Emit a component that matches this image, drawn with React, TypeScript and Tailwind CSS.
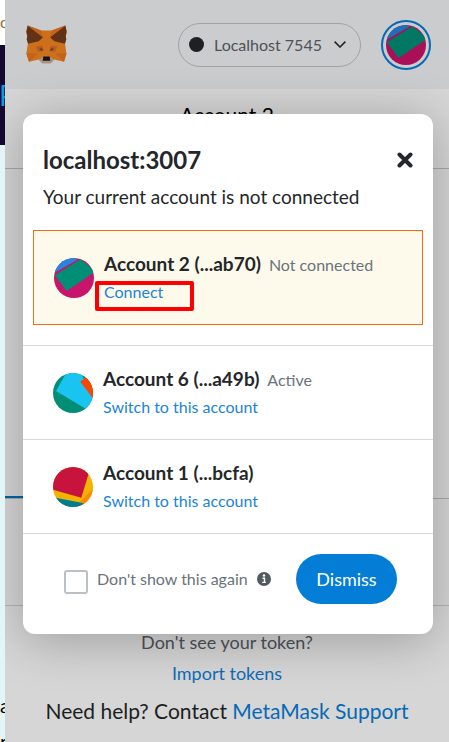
import React from 'react';

type Shape = { points: string; fill: string };

function Jazzicon({ id, base, shapes, className }: { id: string; base: string; shapes: Shape[]; className: string }) {
  return (
    <svg viewBox="0 0 120 120" className={className} aria-hidden="true">
      <clipPath id={id}>
        <circle cx="60" cy="60" r="60" />
      </clipPath>
      <g clipPath={`url(#${id})`}>
        <rect width="120" height="120" fill={base} />
        {shapes.map((s) => (
          <polygon key={s.points} points={s.points} fill={s.fill} />
        ))}
      </g>
    </svg>
  );
}

function Fox() {
  return (
    <svg viewBox="0 0 123 116" className="h-[39px] w-[41px]" role="img" aria-label="MetaMask">
      <polygon points="5,1 46,16 77,16 118,1 122,20 117,54 121,84 114,110 84,103 74,114 49,114 39,103 9,110 1,84 6,54 1,20" fill="#cd701b" />
      <polygon points="5,1 51,36 38,48 6,56 2,42 4,32 1,20" fill="#623216" />
      <polygon points="118,1 72,36 85,48 117,56 121,42 119,32 122,20" fill="#623216" />
      <polygon points="5,1 46,16 51,36" fill="#c2621e" />
      <polygon points="118,1 77,16 72,36" fill="#c2621e" />
      <polygon points="1,84 36,84 9,110" fill="#c4621c" />
      <polygon points="122,84 87,84 114,110" fill="#c4621c" />
      <polygon points="30,64 50,62 53,78 36,80" fill="#ba5a1b" />
      <polygon points="93,64 73,62 70,78 87,80" fill="#ba5a1b" />
      <polygon points="40,71 47,69 51,76 45,76" fill="#43403f" />
      <polygon points="83,71 76,69 72,76 78,76" fill="#43403f" />
      <polygon points="37,103 50,97 73,97 86,103 74,114 49,114" fill="#a79485" />
      <polygon points="52,94 71,94 73,107 50,107" fill="#151515" />
    </svg>
  );
}

const green: Shape[] = [
  { points: '0,45 70,5 0,-40', fill: '#2586dd' },
  { points: '2,52 80,4 125,40 38,99', fill: '#018e77' },
];
const greenDim: Shape[] = [
  { points: '0,45 70,5 0,-40', fill: '#1c70b9' },
  { points: '2,52 80,4 125,40 38,99', fill: '#017864' },
];
const cyan: Shape[] = [
  { points: '0,72 10,100 0,110', fill: '#fa7a00' },
  { points: '25,6 36,0 10,0', fill: '#fa7a00' },
  { points: '9,54 42,-4 80,-6 130,90 98,107', fill: '#19c4f1' },
  { points: '82,26 104,8 130,30 130,90', fill: '#fc4500' },
];
const red: Shape[] = [
  { points: '0,91 94,109 80,125 0,125', fill: '#017c8e' },
  { points: '86,100 125,60 125,120 78,105', fill: '#fb8b00' },
  { points: '-5,67 85,92 110,10 110,-20 -5,-20', fill: '#c8143c' },
];

function AccountRow({ icon, name, status, action }: { icon: React.ReactNode; name: string; status?: string; action: string }) {
  return (
    <div className="flex items-center gap-[10px]">
      {icon}
      <div className="min-w-0">
        <p className="flex h-[29px] items-baseline gap-2 whitespace-nowrap text-[19px] leading-[29px]">
          <span className="font-bold">{name}</span>
          {status && <span className="text-[16px] text-[#6a737d]">{status}</span>}
        </p>
        <button type="button" className="block text-[16px] leading-7 text-[#1b84d8]">{action}</button>
      </div>
    </div>
  );
}

export default function App() {
  return (
    <div className="flex h-screen overflow-hidden bg-[#e3f5f6] text-[#24272a] [font-family:Lato,sans-serif]">
      <aside className="flex w-[5px] shrink-0 flex-col overflow-hidden" aria-hidden="true">
        <div className="h-[45px] shrink-0 bg-white pt-3 text-[16px] leading-5 text-[#8a6a40]">o</div>
        <div className="h-[100px] shrink-0 bg-[#140830] pt-8 text-[28px] leading-9 text-[#0a9bdc]"><span className="-ml-px">P</span></div>
        <div className="shrink-0 pt-[542px] text-[20px] leading-9 text-black">a<br />n</div>
      </aside>

      <div className="relative flex min-w-0 flex-1 flex-col overflow-hidden bg-[#d6d6d6]">
        <header className="flex h-[89px] shrink-0 items-center justify-between bg-[#cbccce] pr-[18px] pl-[21px]">
          <Fox />
          <div className="flex items-center gap-5">
            <button type="button" className="flex h-11 w-[183px] items-center gap-[10px] rounded-full border border-[#a0a2a5] pr-[14px] pl-[10px] text-[16px] text-[#4d5258]">
              <span className="size-[15px] rounded-full bg-[#1e2124]" />
              <span className="flex-1 text-left whitespace-nowrap">Localhost 7545</span>
              <svg viewBox="0 0 12 7" className="h-[7px] w-3" fill="none" stroke="#24272a" strokeWidth="1.600"><path d="M.6.600l5.400 5.400 5.400-5.400" /></svg>
            </button>
            <button type="button" aria-label="Account menu" className="flex size-[50px] items-center justify-center rounded-full border-2 border-[#0769b5]">
              <Jazzicon id="menu" base="#a91057" shapes={greenDim} className="size-10" />
            </button>
          </div>
        </header>
        <div className="h-20 shrink-0 border-b border-[#a9a9a9] pt-[13px] text-center text-[21px] leading-[26px] text-black">Account 2</div>
        <div className="flex h-[330px] shrink-0 items-end border-b border-[#a9a9a9]">
          <div className="h-[2px] w-1/2 bg-[#0462a8]" />
        </div>
        <div className="h-[107px] shrink-0 border-b border-[#b3b3b3]" />
        <div className="flex flex-col items-center pt-[21px] text-[18px] leading-[31px] text-[#4d5258]">
          <p>Don't see your token?</p>
          <a href="#import" className="text-[#0f6db8]">Import tokens</a>
        </div>
        <p className="pt-1 text-center text-[21px] leading-[36px] whitespace-nowrap text-[#1c1f22]">
          Need help? Contact <a href="#support" className="text-[#0769b5]">MetaMask Support</a>
        </p>

        <div className="absolute inset-x-0 top-0 pt-[114px] pr-4 pl-[18px]">
          <section role="dialog" aria-labelledby="site" className="rounded-[12px] bg-white shadow-[0_6px_50px_rgba(0,0,0,0.27)]">
            <div className="flex items-center justify-between px-5 pt-7">
              <h1 id="site" className="text-[24px] leading-9 font-bold">localhost:3007</h1>
              <button type="button" aria-label="Close">
                <svg viewBox="0 0 16 16" className="size-4" fill="none" stroke="#24272a" strokeWidth="4" strokeLinecap="round"><path d="M2.500 2.500l11 11M13.500 2.500l-11 11" /></svg>
              </button>
            </div>
            <p className="px-5 pt-[5px] text-[19px] leading-7">Your current account is not connected</p>
            <div className="mx-[10px] mt-[19px] border border-[#f66a0a] bg-[#fefaeb] px-5 py-[18px]">
              <AccountRow icon={<Jazzicon id="a2" base="#c8146b" shapes={green} className="size-10" />} name="Account 2 (...ab70)" status="Not connected" action="Connect" />
            </div>
            <div className="mt-5 border-t border-[#d6d9dc] px-[30px] py-[18px]">
              <AccountRow icon={<Jazzicon id="a6" base="#018e77" shapes={cyan} className="size-10" />} name="Account 6 (...a49b)" status="Active" action="Switch to this account" />
            </div>
            <div className="border-t border-[#d6d9dc] px-[30px] py-[18px]">
              <AccountRow icon={<Jazzicon id="a1" base="#f2b302" shapes={red} className="size-10" />} name="Account 1 (...bcfa)" action="Switch to this account" />
            </div>
            <div className="flex items-center justify-between border-t border-[#d6d9dc] pt-5 pr-9 pb-[30px] pl-[41px]">
              <div className="flex items-center gap-[9px]">
                <input id="hide" type="checkbox" className="mt-[6px] size-6 appearance-none rounded-[3px] border-2 border-[#bbc0c5]" />
                <label htmlFor="hide" className="text-[16px] whitespace-nowrap text-[#6a737d]">Don't show this again</label>
                <svg viewBox="0 0 14 14" className="size-[14px]"><circle cx="7" cy="7" r="7" fill="#535a61" /><path d="M5.500 6.300h2v4M5.200 10.400h3.600" stroke="#fff" strokeWidth="1.400" fill="none" /><circle cx="7" cy="3.500" r="1.200" fill="#fff" /></svg>
              </div>
              <button type="button" className="h-[50px] w-[101px] rounded-full bg-[#037dd6] text-[18px] text-white">Dismiss</button>
            </div>
          </section>
        </div>
        <div className="pointer-events-none absolute top-[281px] left-[90px] h-[30px] w-[99px] rounded-[2px] border-4 border-[#fe0000]" />
      </div>
    </div>
  );
}
